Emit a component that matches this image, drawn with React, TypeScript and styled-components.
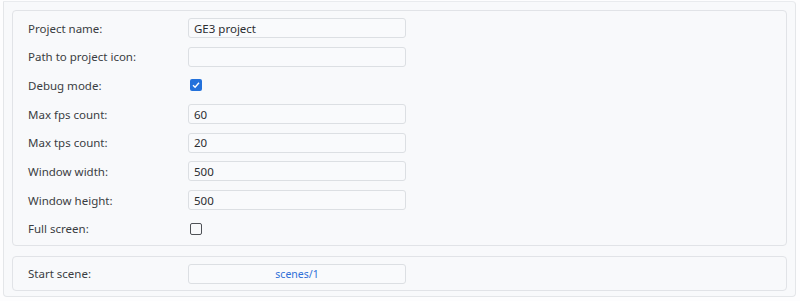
import React, { useState } from "react";
import styled, { createGlobalStyle } from "styled-components";

const GlobalStyle = createGlobalStyle`
  html, body {
    margin: 0;
    padding: 0;
    background: #fdfdfe;
    font-family: "Noto Sans", "Open Sans", sans-serif;
  }
`;

const Panel = styled.div`
  margin: 1px 4px 0 3px;
  height: 296px;
  box-sizing: border-box;
  border: 1px solid #e4e6e9;
  border-top-color: #e9ebee;
  border-radius: 0 4px 4px 4px;
  background: #f8f9fb;
  padding: 8px 8px 0 8px;
  display: flex;
  flex-direction: column;
  gap: 10px;
`;

const Group = styled.div<{ $pad: string }>`
  border: 1px solid #e1e3e7;
  border-radius: 4px;
  padding: ${(p) => p.$pad};
  display: flex;
  flex-direction: column;
  gap: 8.7px;
`;

const Row = styled.div`
  display: flex;
  align-items: center;
  height: 20px;
`;

const Label = styled.div`
  width: 160px;
  font-size: 11.5px;
  color: #3a3d42;
`;

const Input = styled.input`
  width: 218px;
  height: 20px;
  box-sizing: border-box;
  border: 1px solid #dcdfe3;
  border-radius: 3px;
  background: #f9fafc;
  padding: 0 5px;
  font-family: "Noto Sans", "Open Sans", sans-serif;
  font-size: 11.5px;
  color: #2b2d31;
  outline: none;
`;

const LinkButton = styled.button`
  width: 218px;
  height: 20px;
  box-sizing: border-box;
  border: 1px solid #dcdfe3;
  border-radius: 3px;
  background: #f9fafc;
  font-family: "Noto Sans", "Open Sans", sans-serif;
  font-size: 10.5px;
  color: #2f6fd8;
  padding: 0;
  cursor: pointer;
`;

const Check = styled.span<{ $on: boolean }>`
  margin-left: 2px;
  width: 12px;
  height: 12px;
  box-sizing: border-box;
  border-radius: 2px;
  border: ${(p) => (p.$on ? "none" : "1.5px solid #4e5156")};
  background: ${(p) => (p.$on ? "#2371db" : "transparent")};
  display: flex;
  align-items: center;
  justify-content: center;
  cursor: pointer;
`;

const CheckBox = ({ on, toggle }: { on: boolean; toggle: () => void }) => (
  <Check $on={on} onClick={toggle}>
    {on && (
      <svg width="10" height="10" viewBox="0 0 10 10">
        <path d="M2 5.2 L4.1 7.2 L8 2.8" fill="none" stroke="#fff" strokeWidth="1.4" />
      </svg>
    )}
  </Check>
);

export default function App() {
  const [debug, setDebug] = useState(true);
  const [full, setFull] = useState(false);

  return (
    <>
      <GlobalStyle />
      <Panel>
        <Group $pad="7px 15px 6px 15px">
          <Row>
            <Label>Project name:</Label>
            <Input defaultValue="GE3 project" />
          </Row>
          <Row>
            <Label>Path to project icon:</Label>
            <Input defaultValue="" />
          </Row>
          <Row>
            <Label>Debug mode:</Label>
            <CheckBox on={debug} toggle={() => setDebug(!debug)} />
          </Row>
          <Row>
            <Label>Max fps count:</Label>
            <Input defaultValue="60" />
          </Row>
          <Row>
            <Label>Max tps count:</Label>
            <Input defaultValue="20" />
          </Row>
          <Row>
            <Label>Window width:</Label>
            <Input defaultValue="500" />
          </Row>
          <Row>
            <Label>Window height:</Label>
            <Input defaultValue="500" />
          </Row>
          <Row>
            <Label>Full screen:</Label>
            <CheckBox on={full} toggle={() => setFull(!full)} />
          </Row>
        </Group>
        <Group $pad="7px 15px 6px 15px">
          <Row>
            <Label>Start scene:</Label>
            <LinkButton>scenes/1</LinkButton>
          </Row>
        </Group>
      </Panel>
    </>
  );
}
